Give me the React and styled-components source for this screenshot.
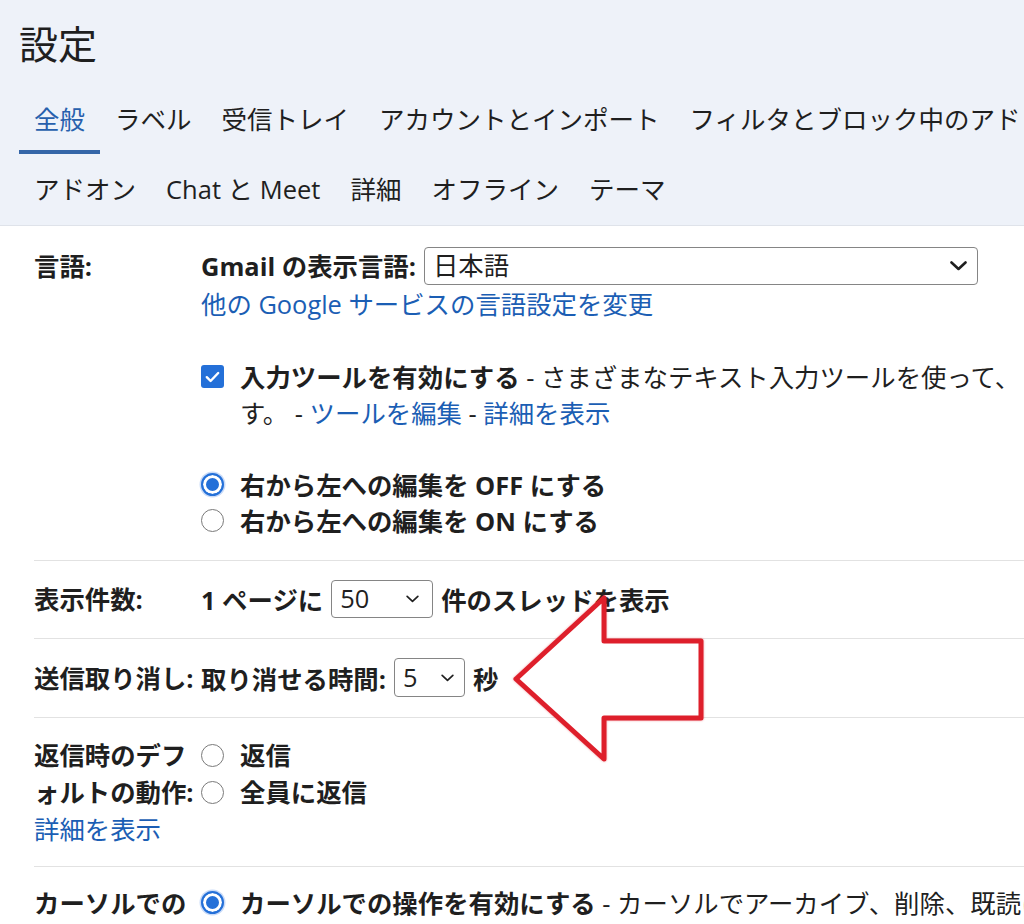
import React from 'react'
import styled, { createGlobalStyle } from 'styled-components'

const colors = {
  text: '#1f1f1f',
  blue: '#2760ad',
  link: '#1b5eb4',
  check: '#2470d8',
  headerBg: '#eef2f9',
  divider: '#e2e2e2',
}

const GlobalStyle = createGlobalStyle`
  body {
    margin: 0;
    background: #fff;
    overflow: hidden;
    font-family: "Open Sans", "Noto Sans CJK JP", sans-serif;
    color: ${colors.text};
  }
`

const Page = styled.div`
  position: relative;
  width: 100vw;
  height: 100vh;
  overflow: hidden;
  white-space: nowrap;
`

const Header = styled.header`
  background: ${colors.headerBg};
  border-bottom: 1px solid #dfe3ea;
  padding-left: 19px;
`

const Title = styled.h1`
  margin: 0;
  height: 84px;
  display: flex;
  align-items: center;
  font-size: 39px;
  font-weight: 400;
`

const TabRow = styled.nav`
  display: flex;
  height: ${p => p.$height}px;
`

const Tab = styled.div`
  display: flex;
  align-items: center;
  padding: 0 15px;
  font-size: 25.5px;
  color: ${p => (p.$active ? colors.blue : colors.text)};
  border-bottom: 4px solid ${p => (p.$active ? '#3566a8' : 'transparent')};
  border-radius: 2px 2px 0 0;
`

const Row = styled.section`
  display: grid;
  grid-template-columns: 167px auto;
  align-items: ${p => p.$align || 'start'};
  margin-left: 34px;
  padding: ${p => p.$pad};
  border-bottom: ${p => (p.$last ? 'none' : `1px solid ${colors.divider}`)};
  font-size: 25.4px;
`

const Label = styled.div`
  font-weight: 700;
  line-height: ${p => p.$lh || 36}px;
`

const Value = styled.div`
  display: flex;
  flex-direction: column;
  line-height: ${p => p.$lh || 36}px;
`

const Inline = styled.div`
  display: flex;
  align-items: center;
  gap: 8px;
  height: ${p => p.$height || 36}px;
`

const Strong = styled.span`
  font-weight: 700;
`

const Link = styled.a`
  color: ${colors.link};
  font-weight: 400;
  text-decoration: none;
`

const Group = styled.div`
  margin-top: ${p => p.$gap || 0}px;
`

const OptionLine = styled.label`
  display: flex;
  align-items: flex-start;
  gap: 16px;
  line-height: ${p => p.$lh || 36}px;
`

const SelectBox = styled.div`
  box-sizing: border-box;
  display: flex;
  align-items: center;
  justify-content: space-between;
  width: ${p => p.$width}px;
  height: ${p => p.$height}px;
  padding: 0 ${p => p.$padRight}px 0 8px;
  border: 1px solid #858585;
  border-radius: 4px;
  background: #fff;
  font-weight: 400;
  line-height: 1;
`

const Check = styled.span`
  flex: none;
  display: flex;
  align-items: center;
  justify-content: center;
  width: 23px;
  height: 23px;
  margin-top: ${p => p.$offset}px;
  border-radius: 3px;
  background: ${colors.check};
`

const Radio = styled.span`
  flex: none;
  box-sizing: border-box;
  width: 23px;
  height: 23px;
  margin-top: ${p => p.$offset}px;
  border-radius: 50%;
  border: ${p => (p.$on ? `2px solid ${colors.check}` : '1.5px solid #7a7a7a')};
  background: ${p => (p.$on ? colors.check : '#fff')};
  box-shadow: ${p => (p.$on ? 'inset 0 0 0 3px #fff, 0 0 0 1.5px #c9dbf8' : 'none')};
`

const Arrow = styled.svg`
  position: absolute;
  left: 500px;
  top: 585px;
  filter: drop-shadow(0 0 1px rgba(225, 40, 50, 0.45));
`

const Chevron = ({ big }) => (
  <svg width={big ? 17 : 13} height={big ? 10 : 8} viewBox="0 0 17 10">
    <path d="M1.5 1.5 L8.5 8 L15.5 1.5" fill="none" stroke="#1f1f1f" strokeWidth={big ? 2.6 : 2.2} strokeLinecap="round" strokeLinejoin="round" />
  </svg>
)

const Select = ({ value, width, height, big, padRight }) => (
  <SelectBox $width={width} $height={height} $padRight={padRight}>
    <span>{value}</span>
    <Chevron big={big} />
  </SelectBox>
)

const tabsTop = [
  { name: '全般', active: true },
  { name: 'ラベル' },
  { name: '受信トレイ' },
  { name: 'アカウントとインポート' },
  { name: 'フィルタとブロック中のアドレス' },
  { name: '転送と POP/IMAP' },
]

const tabsBottom = ['アドオン', 'Chat と Meet', '詳細', 'オフライン', 'テーマ']

export default function App() {
  return (
    <Page>
      <GlobalStyle />
      <Header>
        <Title>設定</Title>
        <TabRow $height={70}>
          {tabsTop.map(t => (
            <Tab key={t.name} $active={t.active}>{t.name}</Tab>
          ))}
        </TabRow>
        <TabRow $height={71}>
          {tabsBottom.map(t => (
            <Tab key={t}>{t}</Tab>
          ))}
        </TabRow>
      </Header>

      <Row $pad="20px 0 21px">
        <Label $lh={40}>言語:</Label>
        <Value>
          <Inline $height={40}>
            <Strong>Gmail の表示言語:</Strong>
            <Select value="日本語" width={554} height={38} big padRight={10} />
          </Inline>
          <Link href="#">他の Google サービスの言語設定を変更</Link>

          <Group $gap={37}>
            <OptionLine>
              <Check $offset={6}>
                <svg width="15" height="12" viewBox="0 0 15 12">
                  <path d="M1.8 6.2 L5.6 10 L13.2 2" fill="none" stroke="#fff" strokeWidth="2.4" strokeLinecap="round" strokeLinejoin="round" />
                </svg>
              </Check>
              <span>
                <Strong>入力ツールを有効にする</Strong> - さまざまなテキスト入力ツールを使って、 ご希望の言語で入力できま
                <br />
                す。 - <Link href="#">ツールを編集</Link> - <Link href="#">詳細を表示</Link>
              </span>
            </OptionLine>
          </Group>

          <Group $gap={36}>
            <OptionLine>
              <Radio $on $offset={6} />
              <Strong>右から左への編集を OFF にする</Strong>
            </OptionLine>
            <OptionLine>
              <Radio $offset={6} />
              <Strong>右から左への編集を ON にする</Strong>
            </OptionLine>
          </Group>
        </Value>
      </Row>

      <Row $pad="19px 0 20px" $align="center">
        <Label>表示件数:</Label>
        <Inline $height={38}>
          <Strong>1 ページに</Strong>
          <Select value="50" width={102} height={38} padRight={13} />
          <Strong>件のスレッドを表示</Strong>
        </Inline>
      </Row>

      <Row $pad="19px 0 20px" $align="center">
        <Label>送信取り消し:</Label>
        <Inline $height={39}>
          <Strong>取り消せる時間:</Strong>
          <Select value="5" width={71} height={39} padRight={10} />
          <Strong>秒</Strong>
        </Inline>
      </Row>

      <Row $pad="19px 0 18px">
        <Label $lh={37}>
          返信時のデフ
          <br />
          ォルトの動作:
          <br />
          <Link href="#">詳細を表示</Link>
        </Label>
        <Value $lh={37}>
          <OptionLine $lh={37}>
            <Radio $offset={7} />
            <Strong>返信</Strong>
          </OptionLine>
          <OptionLine $lh={37}>
            <Radio $offset={7} />
            <Strong>全員に返信</Strong>
          </OptionLine>
        </Value>
      </Row>

      <Row $pad="18px 0 0" $last>
        <Label>
          カーソルでの
          <br />
          操作:
        </Label>
        <Value>
          <OptionLine>
            <Radio $on $offset={6} />
            <span>
              <Strong>カーソルでの操作を有効にする</Strong> - カーソルでアーカイブ、削除、既読にする操作などを行えます
            </span>
          </OptionLine>
        </Value>
      </Row>

      <Arrow width="220" height="190" viewBox="0 0 220 190">
        <path
          d="M16 94 L104 13 L104 56 L201 56 L201 133 L104 133 L104 174 Z"
          fill="#fff"
          stroke="#de1f2b"
          strokeWidth="5"
          strokeLinejoin="round"
        />
      </Arrow>
    </Page>
  )
}
